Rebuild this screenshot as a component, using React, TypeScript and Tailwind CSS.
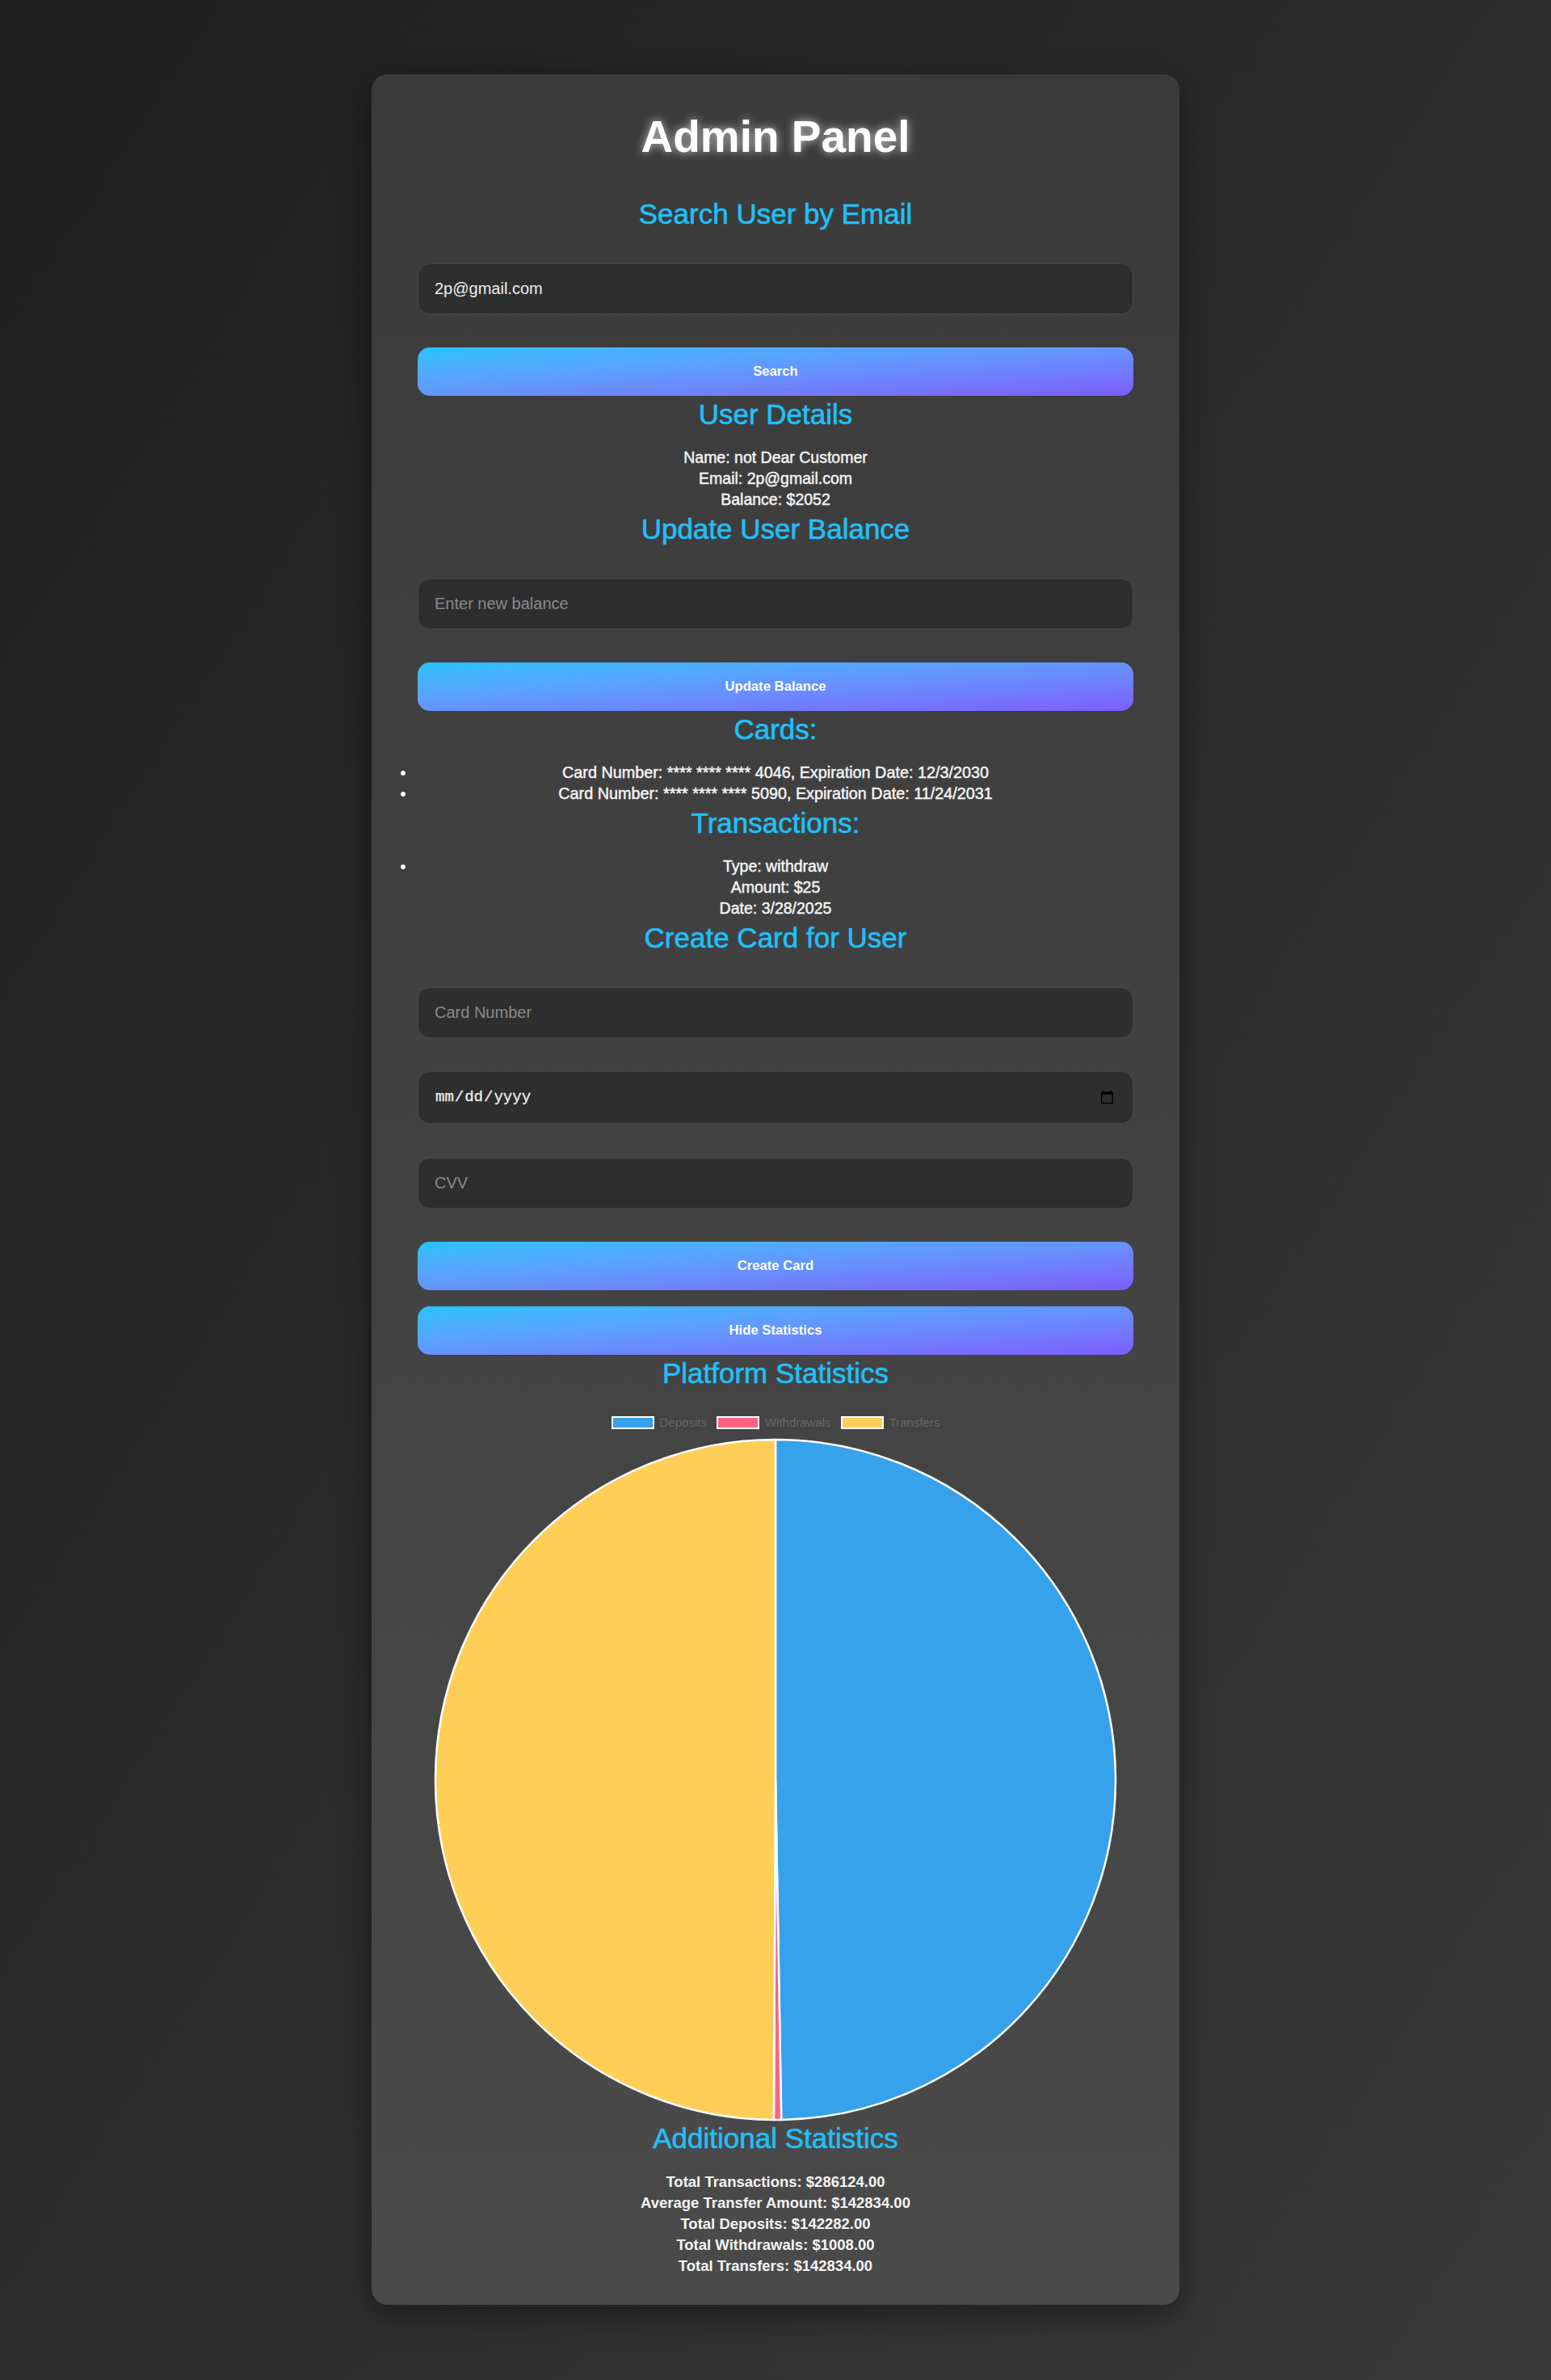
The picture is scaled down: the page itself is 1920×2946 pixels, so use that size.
import React from 'react';

const slices = [
  { label: 'Deposits', value: 142282, color: '#36A2EB' },
  { label: 'Withdrawals', value: 1008, color: '#FF6384' },
  { label: 'Transfers', value: 142834, color: '#FFCE56' },
];

function slicePath(cx: number, cy: number, r: number, a0: number, a1: number) {
  const pt = (a: number) => [cx + r * Math.sin(a), cy - r * Math.cos(a)];
  const [x0, y0] = pt(a0);
  const [x1, y1] = pt(a1);
  const large = a1 - a0 > Math.PI ? 1 : 0;
  return `M${cx},${cy} L${x0},${y0} A${r},${r} 0 ${large} 1 ${x1},${y1} Z`;
}

function PieChart() {
  const total = slices.reduce((s, d) => s + d.value, 0);
  let start = 0;
  return (
    <svg width="846" height="846" viewBox="0 0 846 846" className="mx-auto mt-[11px] block">
      {slices.map((d) => {
        const end = start + (d.value / total) * Math.PI * 2;
        const path = slicePath(423, 423, 421, start, end);
        start = end;
        return <path key={d.label} d={path} fill={d.color} stroke="#ffffff" strokeWidth={2.5} strokeLinejoin="round" />;
      })}
    </svg>
  );
}

function Heading({ children, className = '' }: { children: React.ReactNode; className?: string }) {
  return (
    <h2
      className={`text-center text-[35px] leading-[42px] font-normal text-[#20c0fa] [-webkit-text-stroke:0.6px_currentColor] ${className}`}
    >
      {children}
    </h2>
  );
}

function TextInput({ placeholder, value, className = '' }: { placeholder?: string; value?: string; className?: string }) {
  return (
    <input
      type="text"
      placeholder={placeholder}
      defaultValue={value}
      className={`block w-full h-[63px] rounded-[15px] border border-[#464646] bg-[#2e2e2e] px-[20px] text-[20px] text-[#f0f0f0] placeholder:text-[#8a8a8a] outline-none font-['Liberation_Sans',Arial,sans-serif] ${className}`}
    />
  );
}

function GradientButton({ children, className = '' }: { children: React.ReactNode; className?: string }) {
  return (
    <button
      type="button"
      className={`block w-full h-[60px] rounded-[15px] bg-gradient-to-br from-[#20c3ff] to-[#7b5cff] text-white text-[16.7px] font-bold font-['Liberation_Sans',Arial,sans-serif] ${className}`}
    >
      {children}
    </button>
  );
}

export default function App() {
  const stats = [
    'Total Transactions: $286124.00',
    'Average Transfer Amount: $142834.00',
    'Total Deposits: $142282.00',
    'Total Withdrawals: $1008.00',
    'Total Transfers: $142834.00',
  ];

  return (
    <div className="min-h-[2946px] bg-gradient-to-br from-[#1f1f1f] to-[#393939] py-[92px] font-['Liberation_Sans',Arial,sans-serif]">
      <div className="mx-auto w-[1000px] rounded-[20px] bg-gradient-to-b from-[#3b3b3b] to-[#4a4a4a] px-[57px] pt-[45px] pb-[35px] shadow-[0_12px_40px_rgba(0,0,0,0.45)]">
        <h1 className="text-center text-[55px] leading-[64px] font-bold text-white [text-shadow:0_0_12px_rgba(255,255,255,0.7)]">
          Admin Panel
        </h1>

        {/* search */}
        <Heading className="mt-[43px]">Search User by Email</Heading>
        <TextInput value="2p@gmail.com" className="mt-[40px]" />
        <GradientButton className="mt-[41px]">Search</GradientButton>

        {/* user details */}
        <Heading className="mt-[2px]">User Details</Heading>
        <div className="mt-[19px] text-center text-[19.5px] leading-[26px] text-[#f5f5f5] [-webkit-text-stroke:0.45px_currentColor]">
          <p>Name: not Dear Customer</p>
          <p>Email: 2p@gmail.com</p>
          <p>Balance: $2052</p>
        </div>

        <Heading className="mt-[3px]">Update User Balance</Heading>
        <TextInput placeholder="Enter new balance" className="mt-[40px]" />
        <GradientButton className="mt-[41px]">Update Balance</GradientButton>

        <Heading className="mt-[2px]">Cards:</Heading>
        <ul className="mt-[19px] ml-[-2px] mr-[-2px] list-disc text-center text-[19.8px] leading-[26px] text-[#f5f5f5] [-webkit-text-stroke:0.45px_currentColor]">
          <li>Card Number: **** **** **** 4046, Expiration Date: 12/3/2030</li>
          <li>Card Number: **** **** **** 5090, Expiration Date: 11/24/2031</li>
        </ul>

        <Heading className="mt-[3px]">Transactions:</Heading>
        <ul className="mt-[19px] ml-[-2px] mr-[-2px] list-disc text-center text-[19.5px] leading-[26px] text-[#f5f5f5] [-webkit-text-stroke:0.45px_currentColor]">
          <li>
            <p>Type: withdraw</p>
            <p>Amount: $25</p>
            <p>Date: 3/28/2025</p>
          </li>
        </ul>

        {/* create card */}
        <Heading className="mt-[3px]">Create Card for User</Heading>
        <TextInput placeholder="Card Number" className="mt-[40px]" />
        <input
          type="date"
          className="mt-[41px] block w-full h-[65px] rounded-[15px] border border-[#464646] bg-[#2e2e2e] px-[20px] text-[19px] text-[#f0f0f0] outline-none font-['Liberation_Mono',monospace] [-webkit-text-stroke:0.3px_currentColor]"
        />
        <TextInput placeholder="CVV" className="mt-[42px]" />
        <GradientButton className="mt-[41px]">Create Card</GradientButton>
        <GradientButton className="mt-[20px]">Hide Statistics</GradientButton>

        {/* statistics */}
        <Heading className="mt-[2px]">Platform Statistics</Heading>
        <div className="mt-[32px] flex h-[16px] items-center justify-center gap-[12px]">
          {slices.map((d) => (
            <div key={d.label} className="flex items-center gap-[7px]">
              <span className="block h-[16px] w-[53px] border-2 border-white" style={{ backgroundColor: d.color }} />
              <span className="text-[15px] leading-[16px] text-[#666666]">{d.label}</span>
            </div>
          ))}
        </div>
        <PieChart />

        <Heading>Additional Statistics</Heading>
        <div className="mt-[20px] text-center text-[18.5px] leading-[26px] font-bold text-[#f5f5f5]">
          {stats.map((s) => (
            <p key={s}>{s}</p>
          ))}
        </div>
      </div>
    </div>
  );
}
